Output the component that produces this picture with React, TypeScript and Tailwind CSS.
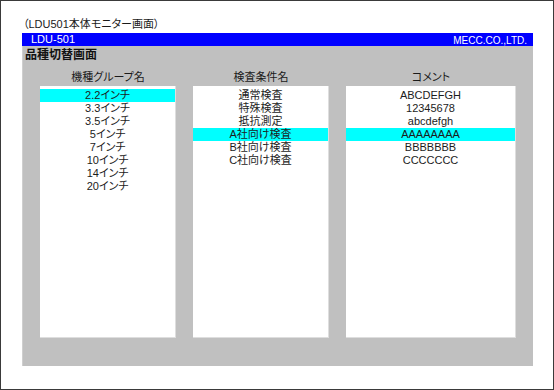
const groups = ["2.2インチ", "3.3インチ", "3.5インチ", "5インチ", "7インチ", "10インチ", "14インチ", "20インチ"];
const conditions = ["通常検査", "特殊検査", "抵抗測定", "A社向け検査", "B社向け検査", "C社向け検査"];
const comments = ["ABCDEFGH", "12345678", "abcdefgh", "AAAAAAAA", "BBBBBBB", "CCCCCCC"];

const columns = [
  { title: "機種グループ名", items: groups, selected: 0 },
  { title: "検査条件名", items: conditions, selected: 3 },
  { title: "コメント", items: comments, selected: 3 },
];

function ListBox({ items, selected }: { items: string[]; selected: number }) {
  return (
    <div className="h-[252px] bg-white border-r border-b border-[#dedede] pt-[3px]">
      {items.map((item, i) => (
        <div
          key={item}
          className={
            "h-[13px] text-center text-[11px] leading-[13px] text-[#1c1c1c] " +
            (i === selected ? "bg-[#00ffff]" : "")
          }
        >
          {item}
        </div>
      ))}
    </div>
  );
}

export default function App() {
  return (
    <div className="w-[554px] h-[390px] border border-[#3a3a3a] bg-white font-['Liberation_Sans','Noto_Sans_CJK_JP',sans-serif] [font-feature-settings:'palt']">
      <div className="pt-[16px] pl-[22px] h-[32px] text-[11px] leading-[14px] text-[#1a1a1a]">
        （LDU501本体モニター画面）
      </div>

      <div className="ml-[21px] w-[511px]">
        <div className="h-[13px] bg-[#0000ff] flex justify-between items-center text-white text-[11px] leading-[13px] pl-[9px] pr-[6px]">
          <span>LDU-501</span>
          <span className="text-[10px] leading-[11px] pt-[2px]">MECC.CO.,LTD.</span>
        </div>

        <div className="h-[320px] bg-[#c0c0c0] border-l border-[#cfcfcf]">
          <div className="pt-[2px] pl-[2px] h-[16px] text-[12px] leading-[14px] font-bold text-[#111]">
            品種切替画面
          </div>
          <div className="mt-[8px] pl-[17px] pr-[17px] grid grid-cols-[136px_136px_170px] gap-x-[17px]">
            {columns.map((col) => (
              <div key={col.title}>
                <div className="h-[16px] text-center text-[11px] leading-[14px] text-[#1a1a1a]">
                  {col.title}
                </div>
                <ListBox items={col.items} selected={col.selected} />
              </div>
            ))}
          </div>
        </div>
      </div>
    </div>
  );
}
